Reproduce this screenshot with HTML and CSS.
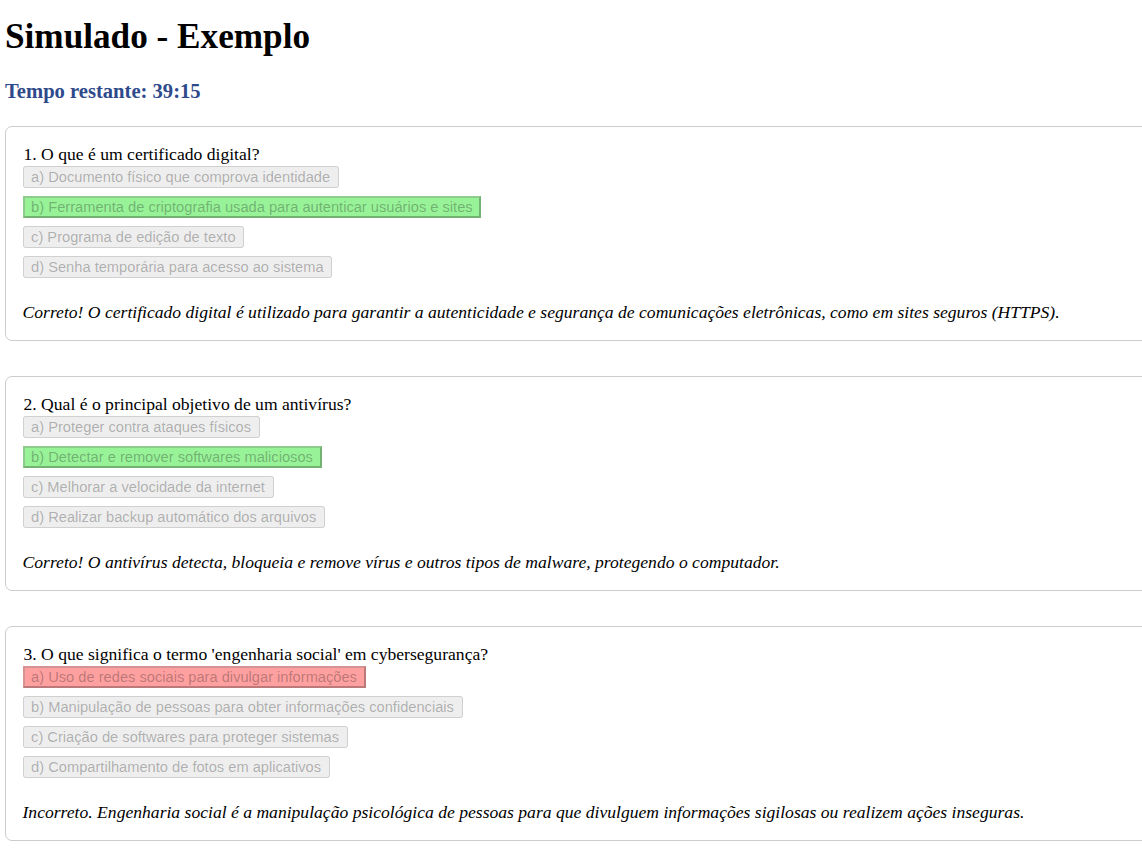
FILE: index.html
```html
<!DOCTYPE html>
<html lang="pt-BR">
<head>
<meta charset="utf-8">
<title>Simulado - Exemplo</title>
<link rel="stylesheet" href="styles.css">
</head>
<body>
<h1 class="title">Simulado - Exemplo</h1>
<h2 class="timer">Tempo restante: 39:15</h2>

<div class="card">
  <div class="question">1. O que é um certificado digital?</div>
  <div class="options">
    <button class="opt" disabled>a) Documento físico que comprova identidade</button>
    <button class="opt correct" disabled>b) Ferramenta de criptografia usada para autenticar usuários e sites</button>
    <button class="opt" disabled>c) Programa de edição de texto</button>
    <button class="opt" disabled>d) Senha temporária para acesso ao sistema</button>
  </div>
  <p class="feedback">Correto! O certificado digital é utilizado para garantir a autenticidade e segurança de comunicações eletrônicas, como em sites seguros (HTTPS).</p>
</div>

<div class="card">
  <div class="question">2. Qual é o principal objetivo de um antivírus?</div>
  <div class="options">
    <button class="opt" disabled>a) Proteger contra ataques físicos</button>
    <button class="opt correct" disabled>b) Detectar e remover softwares maliciosos</button>
    <button class="opt" disabled>c) Melhorar a velocidade da internet</button>
    <button class="opt" disabled>d) Realizar backup automático dos arquivos</button>
  </div>
  <p class="feedback">Correto! O antivírus detecta, bloqueia e remove vírus e outros tipos de malware, protegendo o computador.</p>
</div>

<div class="card">
  <div class="question">3. O que significa o termo 'engenharia social' em cybersegurança?</div>
  <div class="options">
    <button class="opt wrong" disabled>a) Uso de redes sociais para divulgar informações</button>
    <button class="opt" disabled>b) Manipulação de pessoas para obter informações confidenciais</button>
    <button class="opt" disabled>c) Criação de softwares para proteger sistemas</button>
    <button class="opt" disabled>d) Compartilhamento de fotos em aplicativos</button>
  </div>
  <p class="feedback">Incorreto. Engenharia social é a manipulação psicológica de pessoas para que divulguem informações sigilosas ou realizem ações inseguras.</p>
</div>
</body>
</html>
```

FILE: styles.css
```css
html {
  overflow: hidden;
}
body {
  margin: 0;
  padding: 0 5px;
  font-family: "Liberation Serif", "Times New Roman", serif;
  font-size: 17.6px;
  color: #000;
  background: #fff;
}
.title {
  font-size: 35.2px;
  font-weight: bold;
  margin: 17px 0 0;
}
.timer {
  font-size: 20.6px;
  font-weight: bold;
  color: #2e4a8b;
  margin: 23px 0 23px;
}
.card {
  width: 100%;
  border: 1px solid #ccc;
  border-radius: 7px;
  padding: 16.5px 16.5px 17.5px;
  margin-bottom: 35px;
}
.question {
  padding-left: 1px;
}
.options {
  display: flex;
  flex-direction: column;
  align-items: flex-start;
  gap: 8px;
  margin-top: 1.5px;
}
.opt {
  font-family: "Liberation Sans", Arial, sans-serif;
  font-size: 14.667px;
  padding: 1px 6.6px;
  margin: 0;
}
.opt.correct {
  background-color: #98f298;
}
.opt.wrong {
  background-color: #ffa0a0;
}
.feedback {
  font-style: italic;
  margin: 23.5px 0 0;
}
```
